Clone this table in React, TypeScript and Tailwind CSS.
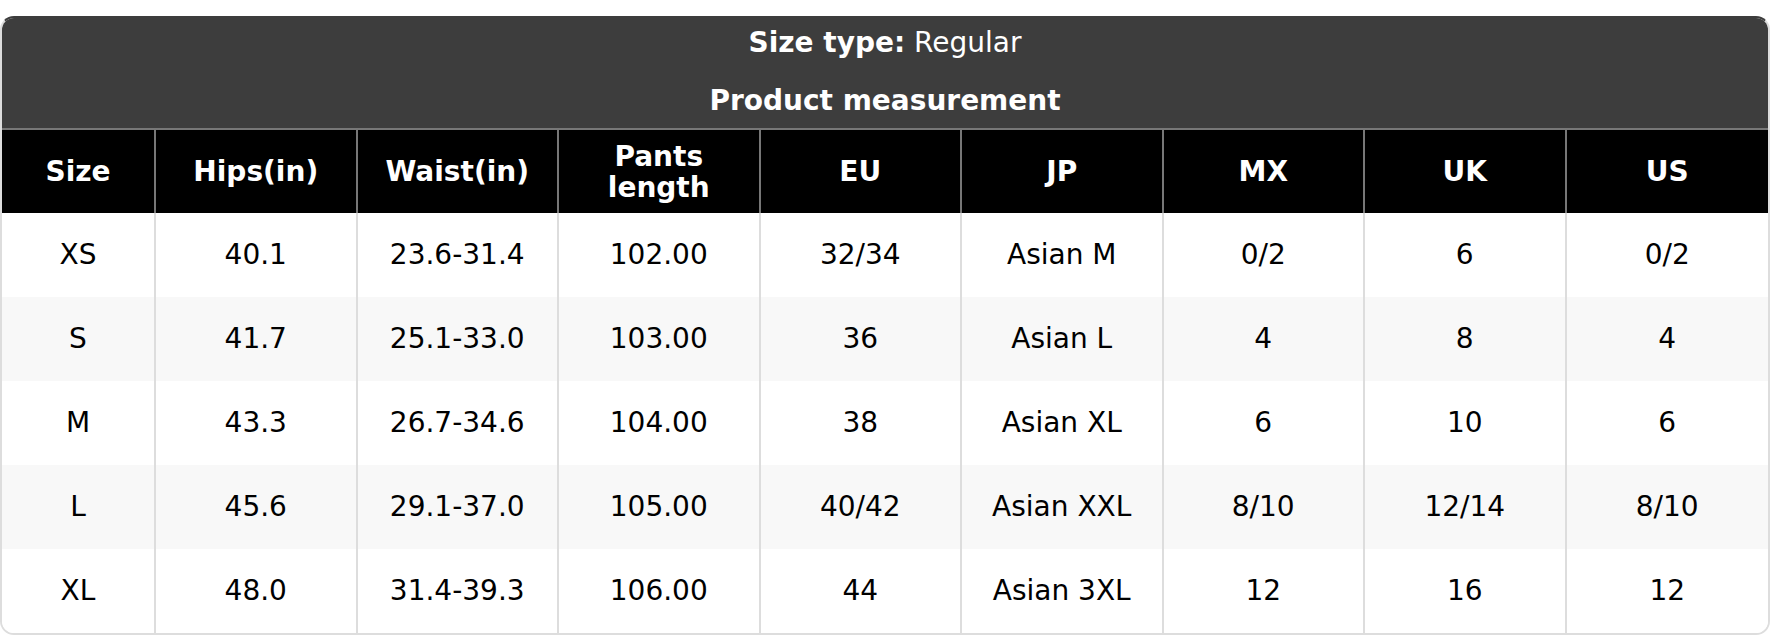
const columns = ["Size", "Hips(in)", "Waist(in)", "Pants length", "EU", "JP", "MX", "UK", "US"];

const rows = [
  ["XS", "40.1", "23.6-31.4", "102.00", "32/34", "Asian M", "0/2", "6", "0/2"],
  ["S", "41.7", "25.1-33.0", "103.00", "36", "Asian L", "4", "8", "4"],
  ["M", "43.3", "26.7-34.6", "104.00", "38", "Asian XL", "6", "10", "6"],
  ["L", "45.6", "29.1-37.0", "105.00", "40/42", "Asian XXL", "8/10", "12/14", "8/10"],
  ["XL", "48.0", "31.4-39.3", "106.00", "44", "Asian 3XL", "12", "16", "12"],
];

export default function App() {
  return (
    <div className="bg-white pt-4 font-['DejaVu_Sans',sans-serif] text-[28px]">
      <div className="overflow-hidden rounded-[14px] border-2 border-[#dddddd] border-t-[#3d3d3d]">
        {/* Title */}
        <div className="flex h-[110px] flex-col items-center bg-[#3d3d3d] pt-[9px] text-white">
          <p className="leading-[32px]">
            <span className="font-bold">Size type:</span> Regular
          </p>
          <p className="mt-[26px] font-bold leading-[32px]">Product measurement</p>
        </div>

        {/* Header row */}
        <div className="grid grid-cols-[154px_repeat(8,1fr)] border-t-2 border-[#777777] bg-black text-white">
          {columns.map((col, i) => (
            <div
              key={col}
              className={`flex h-[83px] items-center justify-center px-2 text-center font-bold leading-[31px] ${
                i < columns.length - 1 ? "border-r-2 border-[#777777]" : ""
              }`}
            >
              {col === "Pants length" ? (
                <span>
                  Pants
                  <br />
                  length
                </span>
              ) : (
                col
              )}
            </div>
          ))}
        </div>

        {/* Body */}
        {rows.map((row, r) => (
          <div
            key={row[0]}
            className={`grid grid-cols-[154px_repeat(8,1fr)] text-black ${
              r % 2 === 1 ? "bg-[#f8f8f8]" : "bg-white"
            }`}
          >
            {row.map((cell, i) => (
              <div
                key={i}
                className={`flex h-[84px] items-center justify-center leading-[32px] ${
                  i < row.length - 1 ? "border-r-2 border-[#dddddd]" : ""
                }`}
              >
                {cell}
              </div>
            ))}
          </div>
        ))}
      </div>
    </div>
  );
}
